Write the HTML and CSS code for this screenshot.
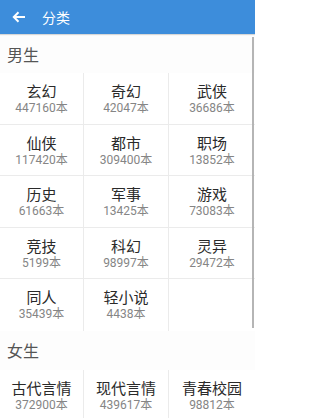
FILE: index.html
```html
<!DOCTYPE html>
<html lang="zh">
<head>
<meta charset="utf-8">
<link rel="stylesheet" href="styles.css">
</head>
<body>
<div class="app">
  <header class="bar">
    <svg class="back" width="14" height="12" viewBox="0 0 14 12">
      <path d="M13 6H2M6.5 1.3L1.8 6l4.7 4.7" fill="none" stroke="#fff" stroke-width="2"/>
    </svg>
    <span class="title">分类</span>
  </header>
  <div class="content">
    <div class="label">男生</div>
    <div class="grid">
      <div class="cell"><div class="name">玄幻</div><div class="count">447160本</div></div>
      <div class="cell"><div class="name">奇幻</div><div class="count">42047本</div></div>
      <div class="cell"><div class="name">武侠</div><div class="count">36686本</div></div>
      <div class="cell"><div class="name">仙侠</div><div class="count">117420本</div></div>
      <div class="cell"><div class="name">都市</div><div class="count">309400本</div></div>
      <div class="cell"><div class="name">职场</div><div class="count">13852本</div></div>
      <div class="cell"><div class="name">历史</div><div class="count">61663本</div></div>
      <div class="cell"><div class="name">军事</div><div class="count">13425本</div></div>
      <div class="cell"><div class="name">游戏</div><div class="count">73083本</div></div>
      <div class="cell"><div class="name">竞技</div><div class="count">5199本</div></div>
      <div class="cell"><div class="name">科幻</div><div class="count">98997本</div></div>
      <div class="cell"><div class="name">灵异</div><div class="count">29472本</div></div>
      <div class="cell last"><div class="name">同人</div><div class="count">35439本</div></div>
      <div class="cell last"><div class="name">轻小说</div><div class="count">4438本</div></div>
      <div class="cell last"></div>
    </div>
    <div class="label">女生</div>
    <div class="grid">
      <div class="cell"><div class="name">古代言情</div><div class="count">372900本</div></div>
      <div class="cell"><div class="name">现代言情</div><div class="count">439617本</div></div>
      <div class="cell"><div class="name">青春校园</div><div class="count">98812本</div></div>
    </div>
    <div class="scroll"></div>
  </div>
</div>
</body>
</html>
```
FILE: styles.css
```css
html, body {
  margin: 0;
  padding: 0;
  background: #fff;
}
body {
  font-family: "Roboto", "Noto Sans CJK SC", sans-serif;
  width: 255px;
  height: 418px;
  overflow: hidden;
}
.app {
  display: flex;
  flex-direction: column;
}
.bar {
  height: 34px;
  background: #3d8ddb;
  display: flex;
  align-items: center;
  box-shadow: 0 1px 1px rgba(0,0,0,0.15);
  position: relative;
  z-index: 1;
}
.back {
  margin-left: 12px;
}
.title {
  margin-left: 16px;
  color: #fff;
  font-family: "Noto Sans CJK SC", sans-serif;
  font-size: 14px;
  line-height: 18px;
  margin-top: -1px;
}
.content {
  position: relative;
}
.label {
  height: 39px;
  padding-left: 7px;
  display: flex;
  align-items: center;
  font-family: "Noto Sans CJK SC", sans-serif;
  font-size: 16px;
  color: #555;
  background: #fdfdfd;
}
.grid {
  display: grid;
  grid-template-columns: 84px 85px 86px;
}
.cell {
  height: 50.6px;
  border-bottom: 1px solid #ebebeb;
  border-right: 1px solid #ebebeb;
  text-align: center;
  display: flex;
  flex-direction: column;
  align-items: center;
}
.cell:nth-child(3n) {
  border-right: none;
}
.cell.last {
  border-bottom: none;
  height: 51.6px;
}
.name {
  margin-top: 8px;
  font-family: "Noto Sans CJK SC", sans-serif;
  font-size: 15px;
  line-height: 19px;
  color: #2a2a2a;
}
.count {
  margin-top: 0;
  font-size: 12px;
  line-height: 16px;
  color: #858585;
}
.scroll {
  position: absolute;
  right: 1px;
  top: 3px;
  width: 2px;
  height: 291px;
  background: #b5b5b5;
}
```
